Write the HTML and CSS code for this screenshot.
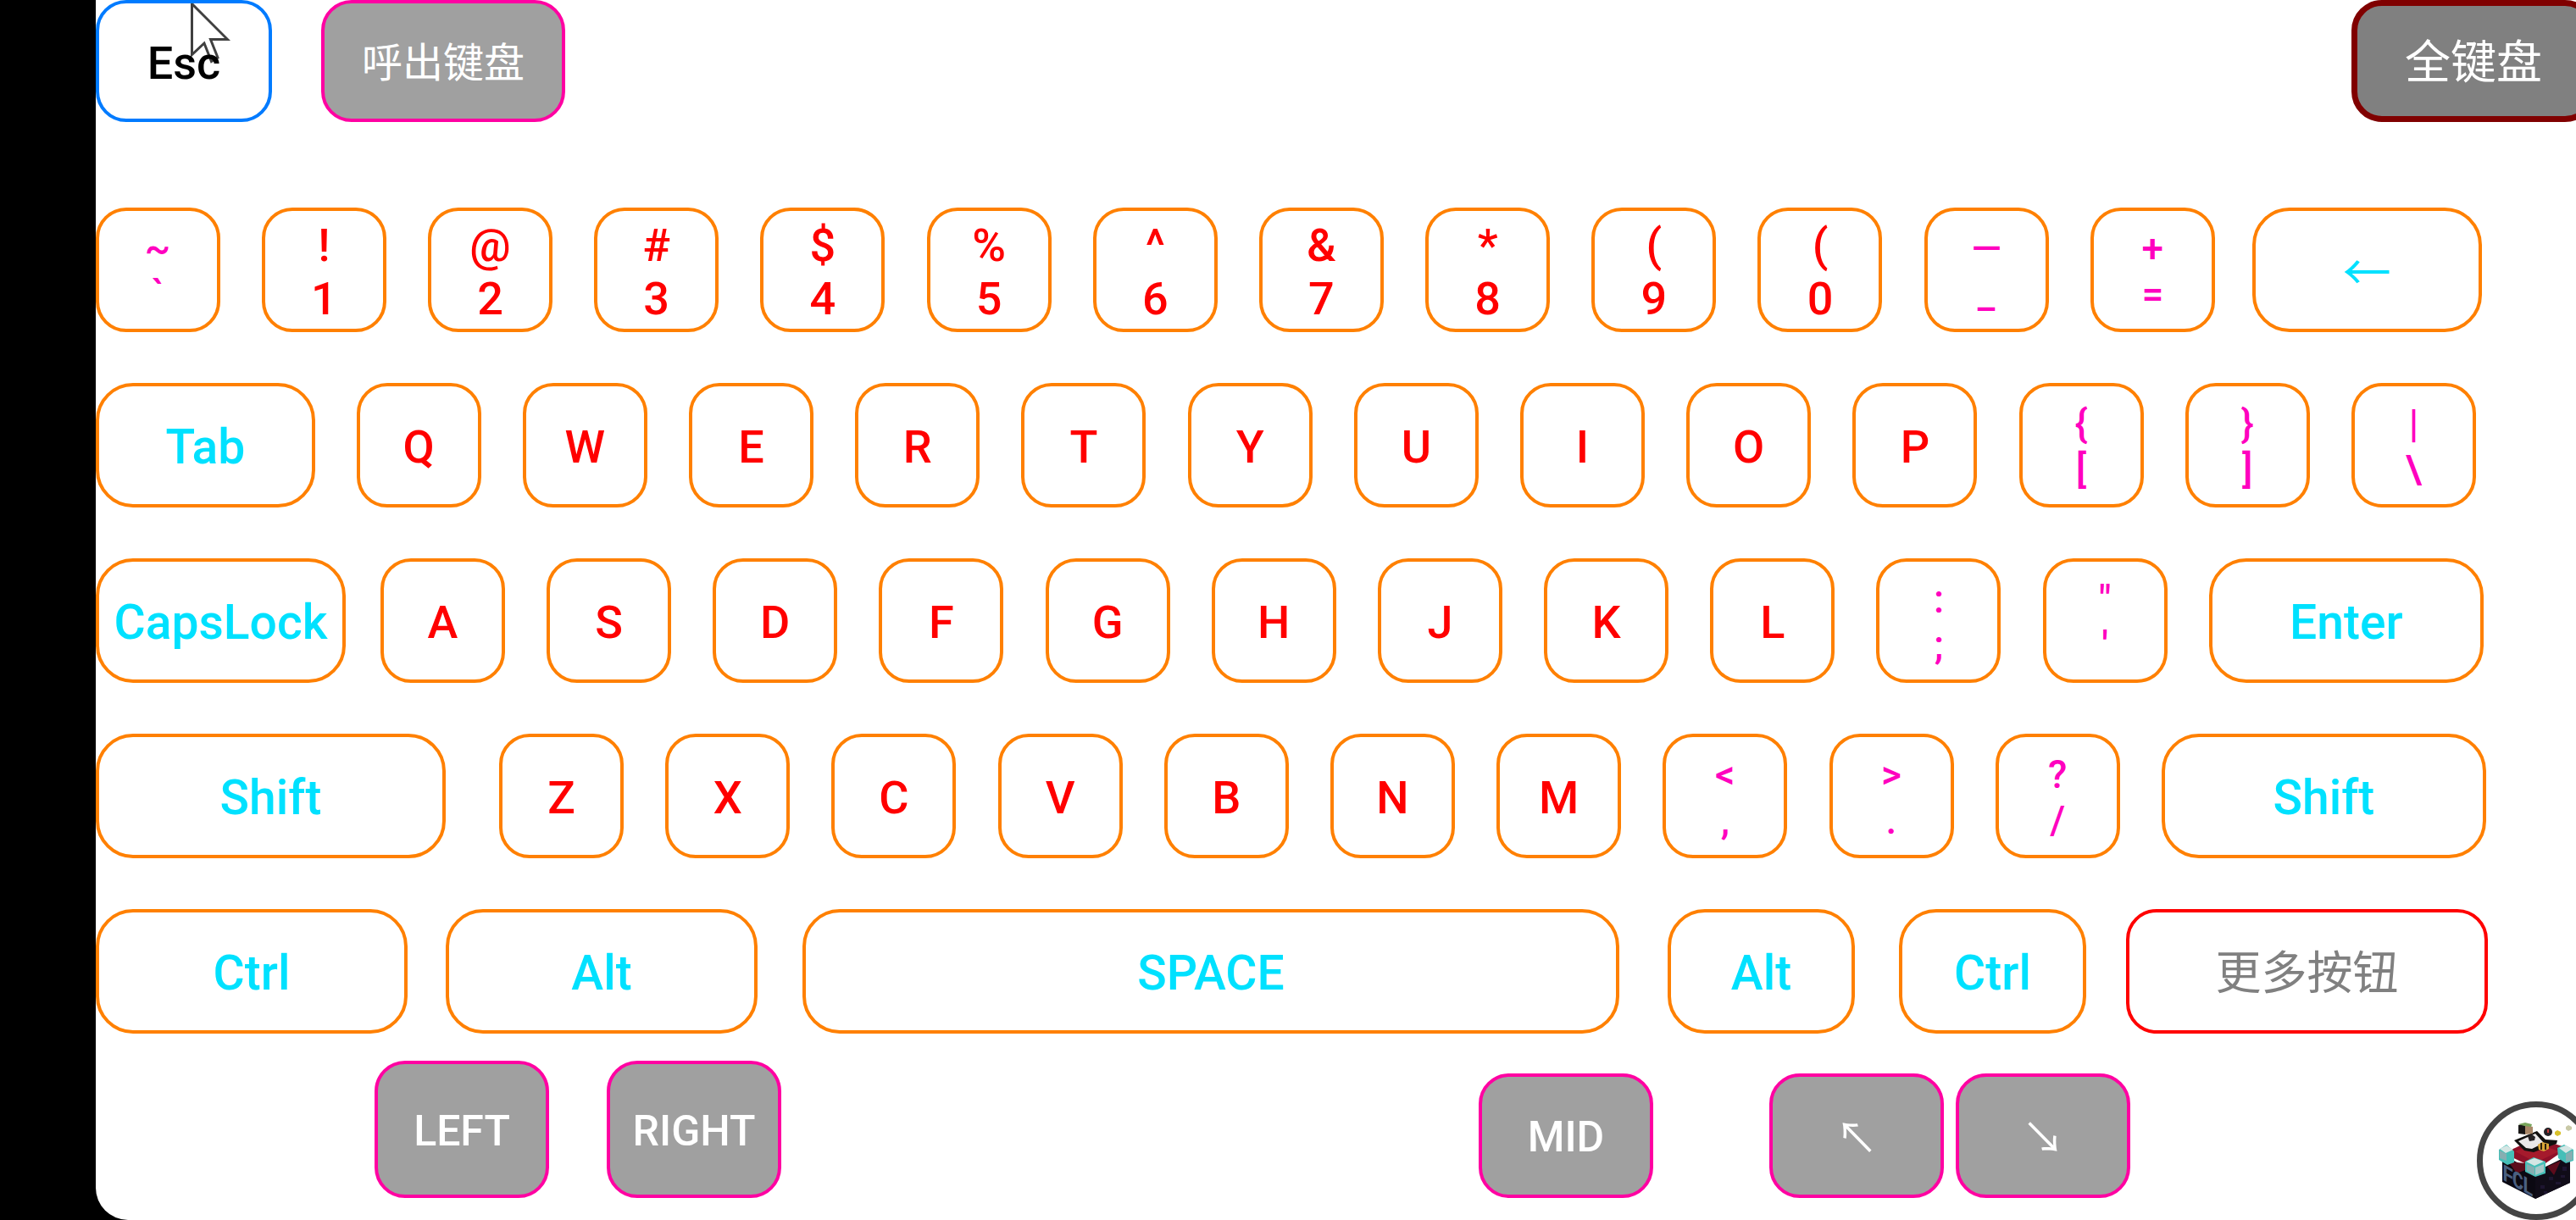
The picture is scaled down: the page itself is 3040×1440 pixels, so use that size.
FILE: index.html
```html
<!DOCTYPE html>
<html lang="zh-CN">
<head>
<meta charset="utf-8">
<title>全键盘</title>
<link rel="stylesheet" href="styles.css">
</head>
<body>
<main class="screen">
  <svg class="cursor" viewBox="0 0 48 74" width="48" height="74">
    <path d="M2.500 3.500V63.500L17 50L25.500 71.500L33 67L24.500 45.500H44.500Z"/>
  </svg>

  <div class="row top">
    <button class="key esc">Esc</button>
    <button class="key gray call">呼出键盘</button>
    <button class="key full">全键盘</button>
  </div>

  <div class="board">
    <div class="row">
      <div class="keys digits">
        <button class="key sym">~<br>`</button>
        <button class="key">!<br>1</button>
        <button class="key">@<br>2</button>
        <button class="key">#<br>3</button>
        <button class="key">$<br>4</button>
        <button class="key">%<br>5</button>
        <button class="key">^<br>6</button>
        <button class="key">&amp;<br>7</button>
        <button class="key">*<br>8</button>
        <button class="key">(<br>9</button>
        <button class="key">(<br>0</button>
        <button class="key sym">—<br>_</button>
        <button class="key sym">+<br>=</button>
      </div>
      <button class="key mod back">←</button>
    </div>

    <div class="row">
      <button class="key mod tab">Tab</button>
      <div class="keys">
        <button class="key">Q</button>
        <button class="key">W</button>
        <button class="key">E</button>
        <button class="key">R</button>
        <button class="key">T</button>
        <button class="key">Y</button>
        <button class="key">U</button>
        <button class="key">I</button>
        <button class="key">O</button>
        <button class="key">P</button>
        <button class="key sym">{<br>[</button>
        <button class="key sym">}<br>]</button>
        <button class="key sym">|<br>\</button>
      </div>
    </div>

    <div class="row">
      <button class="key mod caps">CapsLock</button>
      <div class="keys">
        <button class="key">A</button>
        <button class="key">S</button>
        <button class="key">D</button>
        <button class="key">F</button>
        <button class="key">G</button>
        <button class="key">H</button>
        <button class="key">J</button>
        <button class="key">K</button>
        <button class="key">L</button>
        <button class="key sym">:<br>;</button>
        <button class="key sym">"<br>'</button>
      </div>
      <button class="key mod enter">Enter</button>
    </div>

    <div class="row">
      <button class="key mod shift-left">Shift</button>
      <div class="keys">
        <button class="key">Z</button>
        <button class="key">X</button>
        <button class="key">C</button>
        <button class="key">V</button>
        <button class="key">B</button>
        <button class="key">N</button>
        <button class="key">M</button>
        <button class="key sym">&lt;<br>,</button>
        <button class="key sym">&gt;<br>.</button>
        <button class="key sym">?<br>/</button>
      </div>
      <button class="key mod shift-right">Shift</button>
    </div>

    <div class="row">
      <button class="key mod wide">Ctrl</button>
      <button class="key mod wide alt-left">Alt</button>
      <button class="key mod space">SPACE</button>
      <button class="key mod alt-right">Alt</button>
      <button class="key mod ctrl-right">Ctrl</button>
      <button class="key more">更多按钮</button>
    </div>
  </div>

  <div class="row mouse">
    <button class="key gray tall">LEFT</button>
    <button class="key gray tall right">RIGHT</button>
    <button class="key gray mid">MID</button>
    <button class="key gray arrow nw">↖</button>
    <button class="key gray arrow se">↘</button>
  </div>
</main>

<div class="float">
  <svg class="logo" viewBox="0 0 100 100" width="100" height="100">
    <path fill="#0b0912" d="M5 38L44 58L85 38V71L44 90L5 70Z"/>
    <path fill="#100c18" d="M44 60L85 40V71L44 90Z"/>
    <path fill="#1d1530" d="M50 74h5v4h-5zM60 64h5v4h-5zM68 70h6v3h-6zM76 52h5v5h-5zM54 81h4v3h-4zM64 54h4v3h-4zM74 62h5v3h-5z"/>
    <path fill="#8f1028" d="M20 30L45 18L82 30L46 55L6 36Z"/>
    <path fill="#a51a2c" d="M20 34L44 24L72 34L45 47Z"/>
    <path fill="#5d0c1c" d="M12 46L32 48V56L22 60ZM58 52L74 45L66 62Z"/>
    <path fill="#46bfb8" d="M1 32L10 26L19 34V47L11 50L1 44Z"/>
    <path fill="#d5e6e4" d="M2 31L10 27L18 32L9 36Z"/><path fill="#86aeb1" d="M2 33L10 37V45L2 42Z"/>
    <path fill="#46bfb8" d="M70 30L78 26L89 32V45L80 48L71 42Z"/>
    <path fill="#d5e6e4" d="M72 30L80 27L88 31L80 36Z"/><path fill="#86aeb1" d="M80 37L88 33V44L80 46Z"/>
    <path fill="#46bfb8" d="M32 46L42 41L56 46V60L44 64L32 58Z"/>
    <path fill="#d5e6e4" d="M33 46L43 42L54 46L43 51Z"/><path fill="#86aeb1" d="M34 49L43 53V62L34 57Z"/><path fill="#a5c8c8" d="M44 53L54 49V58L44 62Z"/>
    <path fill="#11100f" d="M19 21L46 10L56 20L70 21L69 25L42 35L31 33Z"/>
    <path fill="#e9e7e8" d="M24 22L44 13L54 24L40 31L33 30Z"/>
    <path fill="#191717" d="M24 3L32 1V14L24 13Z"/><path fill="#a98768" d="M32 3L41 5V13L32 14Z"/><path fill="#79a55c" d="M24 2L32 0L40 2L39 5L31 4Z"/>
    <path fill="#262224" d="M35 16l5-2 4 3-1 4-6 1z"/>
    <path fill="#d9a638" d="M47 26l5-3 8 2v6l-6 3-6-2z"/><path fill="#2d2010" d="M50 24h2v8h-2zM55 25h2v7h-2z"/>
    <circle cx="59" cy="11" r="5" fill="#252327"/><path fill="#c33a3a" d="M58 8h2v4h-2z"/><path fill="#d8c12c" d="M67 11l3-2 4 2v3l-4 2-3-2z"/><path fill="#c9c9a7" d="M80 5l3-2 4 2v3l-4 2-3-2z"/>
    <text class="logo-text" transform="matrix(.86 .5 0 1.100 5 67)">FCL</text>
  </svg>
</div>
</body>
</html>
```
FILE: styles.css
```css
* { box-sizing: border-box; }

body {
  margin: 0;
  width: 3040px;
  height: 1440px;
  overflow: hidden;
  background: #000;
  position: relative;
}

.screen {
  position: relative;
  margin-left: 113px;
  width: 2927px;
  height: 1440px;
  background: #fff;
  border-bottom-left-radius: 38px;
  display: flex;
  flex-direction: column;
}

.row { display: flex; flex: none; }

.keys { display: flex; gap: 49.2px; }
.digits { margin-left: -0.4px; }

.board {
  display: flex;
  flex-direction: column;
  gap: 60px;
  margin-top: 101px;
}

.key {
  flex: none;
  display: flex;
  align-items: center;
  justify-content: center;
  text-align: center;
  width: 147px;
  height: 147px;
  margin: 0;
  padding: 4px 0 0;
  border: 4px solid #ff8000;
  border-radius: 36px;
  background: transparent;
  color: #f00;
  font: 500 54px Roboto, "Noto Sans CJK SC", sans-serif;
  line-height: 63px;
  white-space: nowrap;
}

.sym { color: #ff00bf; font-size: 46px; line-height: 54px; padding-top: 2px; }

.mod { color: #00e1ff; font-size: 57px; line-height: 67px; border-radius: 44px; padding-top: 3px; }

.top .key { height: 144px; }
.top .esc { position: relative; width: 208px; border-color: #007bff; color: #000; }
.gray { background: #a0a0a0; border-color: #ff00a2; color: #fff; font-size: 50px; }
.call { width: 288px; margin-left: 58px; font-size: 48px; font-weight: 400; }
.full {
  width: 288px;
  margin-left: 2108px;
  border: 7px solid #800000;
  background: #808080;
  color: #fff;
  font-weight: 400;
}

.back {
  width: 271px;
  margin-left: 44px;
  padding: 0 0 3px;
  font-family: "Noto Sans CJK SC", sans-serif;
  font-weight: 400;
}
.tab { width: 259px; margin-right: 48.7px; }
.caps { width: 295px; margin-right: 40.8px; }
.enter { width: 324px; margin-left: 49.2px; }
.shift-left { width: 413px; margin-right: 63px; }
.shift-right { width: 383px; margin-left: 49.2px; }
.wide { width: 368px; }
.alt-left { margin-left: 45px; }
.space { width: 964px; margin-left: 53px; }
.alt-right { width: 221px; margin-left: 57px; }
.ctrl-right { width: 221px; margin-left: 52px; }
.more {
  width: 427px;
  margin-left: 47px;
  padding-top: 6px;
  border-color: #f00;
  color: #808080;
  font-weight: 400;
}

.mouse { margin: 32px 0 0 329px; align-items: flex-end; }
.mouse .key { width: 206px; }
.mouse .tall { height: 162px; }
.right { margin-left: 68px; }
.mid { margin-left: 823px; }
.nw { margin-left: 137px; }
.se { margin-left: 14px; }
.arrow { padding: 0 0 2px; font-family: "Noto Sans CJK SC", sans-serif; font-weight: 400; }

.cursor { position: absolute; left: 111px; top: 1px; }
.cursor path { fill: #fff; stroke: #404040; stroke-width: 3; }

.float {
  position: absolute;
  left: 2923px;
  top: 1300px;
  width: 140px;
  height: 140px;
  border: 7px solid #444;
  border-radius: 50%;
  background: #fff;
}

.logo { position: absolute; left: 18px; top: 18px; }
.logo-text { font: 700 26px "Liberation Mono", monospace; fill: #4a5f80; letter-spacing: -2px; }
```
